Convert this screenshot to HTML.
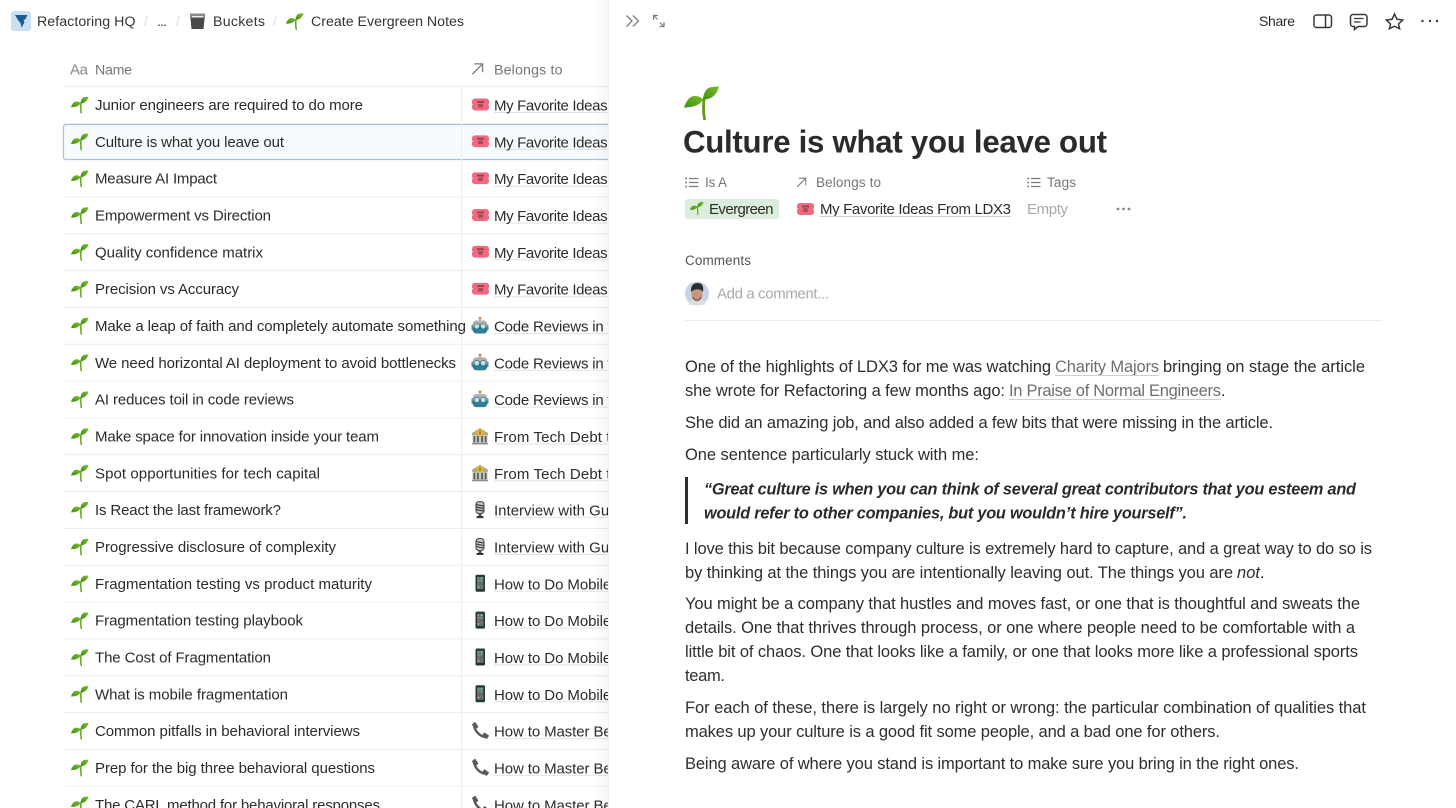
<!DOCTYPE html>
<html lang="en"><head><meta charset="utf-8"><title>Culture is what you leave out</title>
<style>
html,body{margin:0;padding:0;background:#fff;width:1456px;height:808px;overflow:hidden}
svg{display:block}
text{font-family:"Liberation Sans",sans-serif;white-space:pre}
.n{font-size:15px;fill:#2b2b29}
.h{font-size:14.200px;fill:#37352f}
.b{font-size:15px;fill:#2b2b29}
.g{font-size:14.200px;fill:#767571}
.p{font-size:16.500px;fill:#2e2e2c}
.q{font-size:16.300px;fill:#2a2a28;font-weight:bold;font-style:italic}
.l{font-size:16.500px;fill:#6f6e6a}
.u{stroke:#e2e2e0;stroke-width:1}
.r{stroke:#ececea;stroke-width:1}
.s{fill:none;stroke:#7d7c78;stroke-width:1.300}
.k{fill:none;stroke:#383836;stroke-width:1.500}
</style></head><body>
<svg width="1456" height="808" viewBox="0 0 1456 808" xmlns="http://www.w3.org/2000/svg">
<defs>
<clipPath id="c1"><rect x="63" y="87" width="402" height="721"/></clipPath>
<clipPath id="c2"><rect x="462" y="87" width="146" height="721"/></clipPath>
<linearGradient id="sh" x1="0" x2="1"><stop offset="0" stop-color="#000" stop-opacity="0"/><stop offset="1" stop-color="#000" stop-opacity=".03"/></linearGradient>
<linearGradient id="lf" x1="0" y1="1" x2="1" y2="0"><stop offset="0" stop-color="#3f8f12"/><stop offset="1" stop-color="#7cc02a"/></linearGradient>
<symbol id="sp" viewBox="0 0 36 34">
<path d="M20 13C19.300 19 19.300 26 20.500 33" fill="none" stroke="#5d9c12" stroke-width="2.800" stroke-linecap="round"/>
<path d="M0 21.500C2.500 14 6 10 11 10C14.500 10 17.500 11.500 19.500 13.500C16.500 18 11 21.500 0 21.500Z" fill="url(#lf)"/>
<path d="M19 13.500C19.500 8 21.500 3 25.500 1.500C28 .8 31.500 .8 35 0.500C34 5 31.500 9 27.500 11.500C25 13 22 13.800 19 13.500Z" fill="url(#lf)"/>
</symbol>
<symbol id="ti" viewBox="0 0 17 12">
<path d="M3 0H14A3 3 0 0 1 17 3V5.200A.8 .8 0 0 0 17 6.800V9A3 3 0 0 1 14 12H3A3 3 0 0 1 0 9V6.800A.8 .8 0 0 0 0 5.200V3A3 3 0 0 1 3 0Z" fill="#f0697f"/>
<rect x="5" y="2.500" width="7" height="1.800" fill="#96404e"/><rect x="6.200" y="5.300" width="4.600" height="3.500" fill="#a84a58"/>
</symbol>
<symbol id="ro" viewBox="0 0 18 18">
<circle cx="9" cy="1.800" r="1.500" fill="#d98a45"/><rect x="8.400" y="2" width="1.200" height="3" fill="#999"/>
<rect x=".5" y="8" width="3" height="6" rx="1.200" fill="#5d8494"/><rect x="14.500" y="8" width="3" height="6" rx="1.200" fill="#5d8494"/>
<rect x="1.800" y="4" width="14.400" height="13" rx="3.500" fill="#b0b3ad"/>
<path d="M1.800 10.500H16.200V13.500A3.500 3.500 0 0 1 12.700 17H5.300A3.500 3.500 0 0 1 1.800 13.500Z" fill="#2d7d96"/>
<circle cx="5.800" cy="9.800" r="2.700" fill="#bfe3ee" stroke="#3e6f80" stroke-width=".8"/><circle cx="12.200" cy="9.800" r="2.700" fill="#bfe3ee" stroke="#3e6f80" stroke-width=".8"/>
</symbol>
<symbol id="ba" viewBox="0 0 18 18">
<rect x="1.500" y="7" width="15" height="9.500" fill="#c9c9bd"/>
<path d="M9 1L17 6V8H1V6Z" fill="#b3a77c"/>
<circle cx="9" cy="5.500" r="3.300" fill="#e6b62e"/><rect x="8.300" y="3.800" width="1.400" height="3.400" fill="#8a6a10"/>
<g fill="#55605f"><rect x="2.500" y="9" width="1.800" height="6.500"/><rect x="6" y="9" width="1.800" height="6.500"/><rect x="10.200" y="9" width="1.800" height="6.500"/><rect x="13.700" y="9" width="1.800" height="6.500"/></g>
<rect x="1" y="16" width="16" height="1.500" fill="#8f8f85"/>
</symbol>
<symbol id="mi" viewBox="0 0 18 18">
<rect x="5" y="1" width="8" height="12" rx="3" fill="#c4c6c4" stroke="#3d4040" stroke-width="1"/>
<path d="M5 4L13 5.500M5 6.500L13 8M5 9L13 10.500" stroke="#333" stroke-width="1.100"/>
<rect x="7.500" y="13" width="3" height="3" fill="#555"/><rect x="5.500" y="15.500" width="7" height="2" rx=".7" fill="#2f3232"/>
</symbol>
<symbol id="mo" viewBox="0 0 18 18">
<rect x="4.500" y=".5" width="9.500" height="17" rx="1.500" fill="#243638"/>
<rect x="6" y="2.500" width="6.500" height="12.500" fill="#56706a"/>
<g fill="#c35a4a"><rect x="6.500" y="9" width="2" height="1.500"/><rect x="10" y="11.500" width="2" height="1.500"/></g>
<g fill="#9fc07a"><rect x="9.500" y="3.500" width="2" height="1.500"/><rect x="6.500" y="12" width="2" height="1.500"/></g>
<g fill="#8f9a98"><rect x="6.500" y="3.500" width="2" height="1.500"/><rect x="6.500" y="6" width="2" height="1.500"/><rect x="9.500" y="6" width="2" height="1.500"/></g>
</symbol>
<symbol id="ph" viewBox="0 0 18 18">
<path d="M3 2.500C3.200 8.500 8.800 14.800 15 15" fill="none" stroke="#5a5a57" stroke-width="2.400"/>
<path d="M1.500 2.500L4 .5L6.800 4.800L4.300 6.800Z" fill="#5a5a57" stroke="#5a5a57" stroke-linejoin="round"/>
<path d="M11.500 13.500L13.500 11L17.500 13.800L15.500 16.500Z" fill="#5a5a57" stroke="#5a5a57" stroke-linejoin="round"/>
</symbol>
<symbol id="li" viewBox="0 0 14 12">
<g fill="#7d7c78"><circle cx="1.200" cy="2" r="1"/><circle cx="1.200" cy="6" r="1"/><circle cx="1.200" cy="10" r="1"/></g>
<path d="M4 2H13.500M4 6H13.500M4 10H13.500" stroke="#7d7c78" stroke-width="1.200"/>
</symbol>
<symbol id="ar" viewBox="0 0 14 14">
<path d="M1.500 12.500L12.500 1.500M3.500 1.500H12.500V10.500" fill="none" stroke="#7d7c78" stroke-width="1.400"/>
</symbol>
</defs>

<!-- selected row -->
<rect x="63.500" y="124.500" width="560" height="35" rx="2.500" fill="#f8fbfd" stroke="#a4c2de" stroke-width="1.200"/>

<!-- row lines -->
<g class="r">
<path d="M63 86.500H608"/>
<path d="M63 197H608M63 233.800H608M63 270.600H608M63 307.500H608M63 344.300H608M63 381.100H608M63 418H608M63 454.800H608M63 491.600H608M63 528.500H608M63 565.300H608M63 602.100H608M63 638.900H608M63 675.800H608M63 712.600H608M63 749.400H608M63 786.300H608"/>
<path d="M63 123.500H608"/>
<path d="M461.500 87V808"/>
</g>

<!-- top bar left -->
<rect x="11" y="11" width="20" height="20" rx="3" fill="#c9e0f0"/>
<path d="M15 15H27.500L25.500 19L23.500 20.500L24.500 22.500L21.500 27.500L20.500 23L18 20Z" fill="#1b5c8c"/>
<text x="37" y="26" class="h" textLength="98.500">Refactoring HQ</text>
<text x="144" y="26" class="h" style="fill:#dededc">/</text>
<text x="157" y="26" class="h" textLength="10">...</text>
<text x="176" y="26" class="h" style="fill:#dededc">/</text>
<path d="M190 14H205L203.500 29H191.500Z" fill="#4a4a48"/><path d="M190 13.500H205V16H190Z" fill="#8a8a88"/><rect x="191.500" y="16" width="12" height="1.500" fill="#eee"/>
<text x="213" y="26" class="h" textLength="52">Buckets</text>
<text x="273" y="26" class="h" style="fill:#dededc">/</text>
<use href="#sp" x="286" y="13" width="18" height="17"/>
<text x="311" y="26" class="h" textLength="153">Create Evergreen Notes</text>

<!-- table header -->
<text x="70" y="74.500" style="font-size:15px;fill:#8a8986" textLength="18">Aa</text>
<text x="95" y="74.500" class="g" textLength="37">Name</text>
<use href="#ar" x="471" y="62.500" width="13" height="13"/>
<text x="494" y="74.500" class="g" textLength="68.500">Belongs to</text>

<!-- names -->
<g clip-path="url(#c1)">
<text x="95" y="110" class="n" textLength="268">Junior engineers are required to do more</text>
<text x="95" y="146.800" class="n" textLength="189">Culture is what you leave out</text>
<text x="95" y="183.700" class="n" textLength="122">Measure AI Impact</text>
<text x="95" y="220.500" class="n" textLength="176">Empowerment vs Direction</text>
<text x="95" y="257.300" class="n" textLength="168">Quality confidence matrix</text>
<text x="95" y="294.200" class="n" textLength="144">Precision vs Accuracy</text>
<text x="95" y="331" class="n" textLength="371">Make a leap of faith and completely automate something</text>
<text x="95" y="367.800" class="n" textLength="361">We need horizontal AI deployment to avoid bottlenecks</text>
<text x="95" y="404.600" class="n" textLength="199">AI reduces toil in code reviews</text>
<text x="95" y="441.500" class="n" textLength="284">Make space for innovation inside your team</text>
<text x="95" y="478.300" class="n" textLength="225">Spot opportunities for tech capital</text>
<text x="95" y="515.100" class="n" textLength="186">Is React the last framework?</text>
<text x="95" y="552" class="n" textLength="241">Progressive disclosure of complexity</text>
<text x="95" y="588.800" class="n" textLength="277">Fragmentation testing vs product maturity</text>
<text x="95" y="625.600" class="n" textLength="208">Fragmentation testing playbook</text>
<text x="95" y="662.500" class="n" textLength="176">The Cost of Fragmentation</text>
<text x="95" y="699.300" class="n" textLength="193">What is mobile fragmentation</text>
<text x="95" y="736.100" class="n" textLength="265">Common pitfalls in behavioral interviews</text>
<text x="95" y="772.900" class="n" textLength="280">Prep for the big three behavioral questions</text>
<text x="95" y="809.800" class="n" textLength="285">The CARL method for behavioral responses</text>
</g>

<!-- sprouts in rows -->
<g>
<use href="#sp" x="71" y="96.500" width="18" height="17"/><use href="#sp" x="71" y="133.300" width="18" height="17"/>
<use href="#sp" x="71" y="170.200" width="18" height="17"/><use href="#sp" x="71" y="207" width="18" height="17"/>
<use href="#sp" x="71" y="243.800" width="18" height="17"/><use href="#sp" x="71" y="280.700" width="18" height="17"/>
<use href="#sp" x="71" y="317.500" width="18" height="17"/><use href="#sp" x="71" y="354.300" width="18" height="17"/>
<use href="#sp" x="71" y="391.100" width="18" height="17"/><use href="#sp" x="71" y="428" width="18" height="17"/>
<use href="#sp" x="71" y="464.800" width="18" height="17"/><use href="#sp" x="71" y="501.600" width="18" height="17"/>
<use href="#sp" x="71" y="538.500" width="18" height="17"/><use href="#sp" x="71" y="575.300" width="18" height="17"/>
<use href="#sp" x="71" y="612.100" width="18" height="17"/><use href="#sp" x="71" y="649" width="18" height="17"/>
<use href="#sp" x="71" y="685.800" width="18" height="17"/><use href="#sp" x="71" y="722.600" width="18" height="17"/>
<use href="#sp" x="71" y="759.400" width="18" height="17"/><use href="#sp" x="71" y="796.300" width="18" height="17"/>
</g>

<!-- belongs -->
<g clip-path="url(#c2)">
<g class="u">
<path d="M494 112.500H608M494 149.300H608M494 186.200H608M494 223H608M494 259.800H608M494 296.700H608M494 333.500H608M494 370.300H608M494 407.100H608M494 444H608M494 480.800H608M494 517.600H608M494 554.500H608M494 591.300H608M494 628.100H608M494 665H608M494 701.800H608M494 738.600H608M494 775.400H608"/>
</g>
<use href="#ti" x="472" y="98.500" width="17" height="12"/><text x="494" y="110.500" class="b" textLength="191">My Favorite Ideas From LDX3</text>
<use href="#ti" x="472" y="135.300" width="17" height="12"/><text x="494" y="147.300" class="b" textLength="191">My Favorite Ideas From LDX3</text>
<use href="#ti" x="472" y="172.200" width="17" height="12"/><text x="494" y="184.200" class="b" textLength="191">My Favorite Ideas From LDX3</text>
<use href="#ti" x="472" y="209" width="17" height="12"/><text x="494" y="221" class="b" textLength="191">My Favorite Ideas From LDX3</text>
<use href="#ti" x="472" y="245.800" width="17" height="12"/><text x="494" y="257.800" class="b" textLength="191">My Favorite Ideas From LDX3</text>
<use href="#ti" x="472" y="282.700" width="17" height="12"/><text x="494" y="294.700" class="b" textLength="191">My Favorite Ideas From LDX3</text>
<use href="#ro" x="471" y="316.500" width="18" height="18"/><text x="494" y="331.500" class="b" textLength="196">Code Reviews in the Age of AI</text>
<use href="#ro" x="471" y="353.300" width="18" height="18"/><text x="494" y="368.300" class="b" textLength="196">Code Reviews in the Age of AI</text>
<use href="#ro" x="471" y="390.100" width="18" height="18"/><text x="494" y="405.100" class="b" textLength="196">Code Reviews in the Age of AI</text>
<use href="#ba" x="471" y="427" width="18" height="18"/><text x="494" y="442" class="b" textLength="213">From Tech Debt to Tech Capital</text>
<use href="#ba" x="471" y="463.800" width="18" height="18"/><text x="494" y="478.800" class="b" textLength="213">From Tech Debt to Tech Capital</text>
<use href="#mi" x="471" y="500.600" width="18" height="18"/><text x="494" y="515.600" class="b" textLength="207">Interview with Guillermo Rauch</text>
<use href="#mi" x="471" y="537.500" width="18" height="18"/><text x="494" y="552.500" class="b" textLength="207">Interview with Guillermo Rauch</text>
<use href="#mo" x="471" y="574.300" width="18" height="18"/><text x="494" y="589.300" class="b" textLength="168">How to Do Mobile Testing</text>
<use href="#mo" x="471" y="611.100" width="18" height="18"/><text x="494" y="626.100" class="b" textLength="168">How to Do Mobile Testing</text>
<use href="#mo" x="471" y="648" width="18" height="18"/><text x="494" y="663" class="b" textLength="168">How to Do Mobile Testing</text>
<use href="#mo" x="471" y="684.800" width="18" height="18"/><text x="494" y="699.800" class="b" textLength="168">How to Do Mobile Testing</text>
<use href="#ph" x="471" y="722" width="18" height="18"/><text x="494" y="736.600" class="b" textLength="240">How to Master Behavioral Interviews</text>
<use href="#ph" x="471" y="758.800" width="18" height="18"/><text x="494" y="773.400" class="b" textLength="240">How to Master Behavioral Interviews</text>
<use href="#ph" x="471" y="795.700" width="18" height="18"/><text x="494" y="810.300" class="b" textLength="240">How to Master Behavioral Interviews</text>
</g>

<!-- right panel -->
<rect x="594" y="0" width="14" height="808" fill="url(#sh)"/>
<rect x="608" y="0" width="848" height="808" fill="#fff"/>
<path d="M608.500 0V808" stroke="#ededeb"/>

<path d="M626.500 15.500L632 21L626.500 26.500M633 15.500L638.500 21L633 26.500" class="s"/>
<path d="M653.500 20V15.500H658M653.500 15.500L657.500 19.500M664 22V26.500H659.500M664 26.500L660 22.500" class="s" style="stroke-width:1.200"/>

<text x="1259" y="26" class="h" style="fill:#2b2b29;font-size:14px" textLength="36">Share</text>
<rect x="1314" y="15" width="17.500" height="12.500" rx="2.500" class="k"/><path d="M1325.500 15V27.500" class="k"/>
<path d="M1353 14.500H1364.500A2.500 2.500 0 0 1 1367 17V24A2.500 2.500 0 0 1 1364.500 26.500H1358L1354.500 29.500V26.500H1353A2.500 2.500 0 0 1 1350.500 24V17A2.500 2.500 0 0 1 1353 14.500Z" class="k"/>
<path d="M1354 18.500H1363.500M1354 22H1360.500" class="k" style="stroke-width:1.300"/>
<path d="M1394.500 14L1397 19.300L1402.700 20L1398.500 24L1399.600 28.700L1394.500 26.200L1389.400 28.700L1390.500 24L1386.300 20L1392 19.300Z" class="k"/>
<g fill="#383836"><circle cx="1422.500" cy="21" r="1.200"/><circle cx="1430" cy="21" r="1.200"/><circle cx="1437" cy="21" r="1.200"/></g>

<!-- page header -->
<use href="#sp" x="684" y="86" width="36" height="34"/>
<text x="683" y="152.500" style="font-size:31.200px;font-weight:bold;fill:#2b2b29" textLength="424">Culture is what you leave out</text>

<!-- props -->
<use href="#li" x="685" y="176.500" width="14" height="12"/>
<text x="705" y="187" class="g" style="font-size:13.500px" textLength="22">Is A</text>
<use href="#ar" x="796" y="177" width="11" height="11"/>
<text x="816" y="187" class="g" style="font-size:13.500px" textLength="65">Belongs to</text>
<use href="#li" x="1027" y="176.500" width="14" height="12"/>
<text x="1047" y="187" class="g" style="font-size:13.500px" textLength="29">Tags</text>

<rect x="685" y="199" width="94" height="20" rx="3" fill="#dbeddb"/>
<use href="#sp" x="690" y="201.500" width="14" height="13.500"/>
<text x="709" y="214" class="n" textLength="64.500">Evergreen</text>
<use href="#ti" x="797" y="203" width="17" height="12"/>
<text x="820" y="214" class="n" textLength="191">My Favorite Ideas From LDX3</text>
<path d="M820 216.500H1011" stroke="#cfcfcd"/>
<text x="1027" y="214" class="n" style="fill:#a9a9a6" textLength="41">Empty</text>
<g fill="#8a8986"><circle cx="1118" cy="209" r="1.400"/><circle cx="1123.500" cy="209" r="1.400"/><circle cx="1129" cy="209" r="1.400"/></g>

<!-- comments -->
<text x="685" y="265" style="font-size:13.500px;fill:#555552;-webkit-text-stroke:.2px #555552" textLength="66">Comments</text>
<circle cx="697" cy="293.500" r="12" fill="#c6d4e6"/>
<path d="M689 305C689 300 693 299 697 299C701 299 705 300 705 305Z" fill="#dcdfe6"/>
<ellipse cx="697" cy="294" rx="5.500" ry="7.500" fill="#c9957f"/>
<path d="M691 292C690.500 285 694 283 698 283C702 283 704 286 703 292C701 288.500 694 288.500 691 292Z" fill="#2b2f38"/>
<path d="M693 297C694 301 700 301 701 297" fill="none" stroke="#6b4a3f" stroke-width="1"/>
<text x="717" y="298.500" class="n" style="fill:#a9a9a6" textLength="112">Add a comment...</text>
<path d="M685 320.500H1382" stroke="#ececea"/>

<!-- body -->
<text x="685" y="372" class="p" textLength="366">One of the highlights of LDX3 for me was watching</text>
<text x="1055" y="372" class="l" textLength="104">Charity Majors</text>
<path d="M1055 375.500H1159" stroke="#cfcfcc"/>
<text x="1163" y="372" class="p" textLength="202">bringing on stage the article</text>
<text x="685" y="396" class="p" textLength="320">she wrote for Refactoring a few months ago:</text>
<text x="1009" y="396" class="l" textLength="212">In Praise of Normal Engineers</text>
<path d="M1009 399.500H1221" stroke="#cfcfcc"/>
<text x="1221" y="396" class="p">.</text>
<text x="685" y="428" class="p" textLength="588">She did an amazing job, and also added a few bits that were missing in the article.</text>
<text x="685" y="460" class="p" textLength="294">One sentence particularly stuck with me:</text>
<rect x="685" y="477" width="3" height="47" fill="#2e2e2c"/>
<text x="704" y="494.500" class="q" textLength="652">“Great culture is when you can think of several great contributors that you esteem and</text>
<text x="704" y="518.500" class="q" textLength="483">would refer to other companies, but you wouldn’t hire yourself”.</text>
<text x="685" y="554" class="p" textLength="687">I love this bit because company culture is extremely hard to capture, and a great way to do so is</text>
<text x="685" y="578" class="p" textLength="548">by thinking at the things you are intentionally leaving out. The things you are</text>
<text x="1237" y="578" class="p" style="font-style:italic" textLength="23">not</text>
<text x="1260" y="578" class="p">.</text>
<text x="685" y="609" class="p" textLength="675">You might be a company that hustles and moves fast, or one that is thoughtful and sweats the</text>
<text x="685" y="633" class="p" textLength="670">details. One that thrives through process, or one where people need to be comfortable with a</text>
<text x="685" y="657" class="p" textLength="673">little bit of chaos. One that looks like a family, or one that looks more like a professional sports</text>
<text x="685" y="681" class="p" textLength="40">team.</text>
<text x="685" y="713" class="p" textLength="681">For each of these, there is largely no right or wrong: the particular combination of qualities that</text>
<text x="685" y="737" class="p" textLength="535">makes up your culture is a good fit some people, and a bad one for others.</text>
<text x="685" y="769" class="p" textLength="614">Being aware of where you stand is important to make sure you bring in the right ones.</text>
</svg>
</body></html>
